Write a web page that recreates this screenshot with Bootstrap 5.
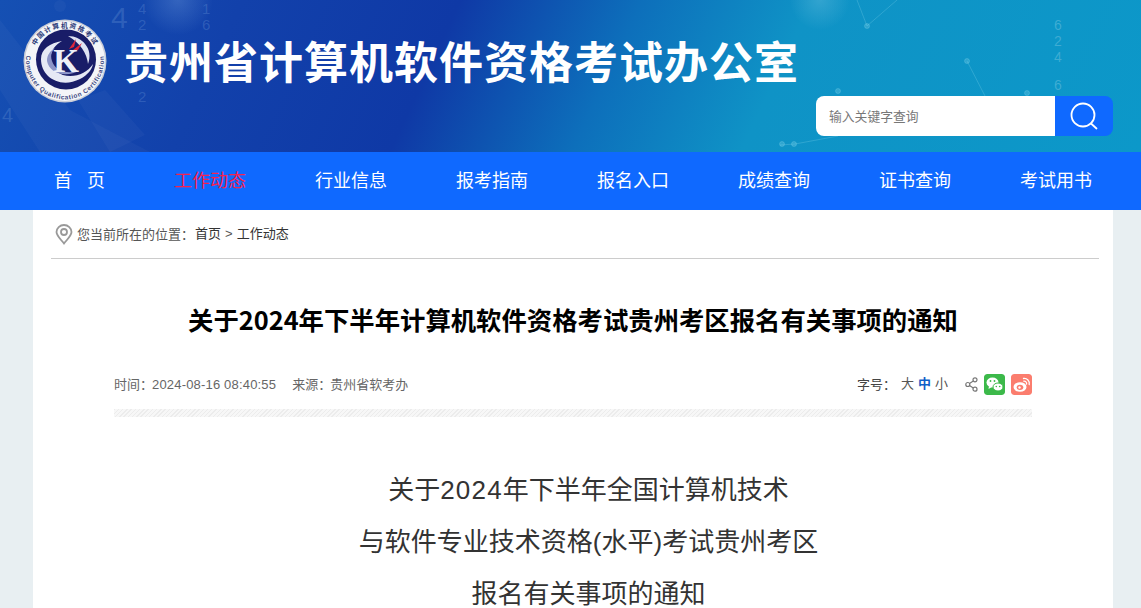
<!DOCTYPE html>
<html lang="zh-CN">
<head>
  <meta charset="UTF-8">
  <meta name="viewport" content="width=device-width, initial-scale=1.0">
  <title>贵州省计算机软件资格考试办公室</title>
  <link href="https://cdn.jsdelivr.net/npm/bootstrap@5.3.0/dist/css/bootstrap.min.css" rel="stylesheet">
  <style>
    html, body { height: 608px; overflow: hidden; }
    body {
      background-color: #e8eff2;
      font-family: "Liberation Sans", "Noto Sans CJK SC", sans-serif;
      color: #333;
    }
    .site-banner {
      position: relative;
      height: 152px;
      overflow: hidden;
      background:
        radial-gradient(circle 35px at 178px 0, rgba(170, 210, 250, .22), transparent 100%),
        radial-gradient(circle 30px at 820px 0, rgba(190, 230, 245, .2), transparent 100%),
        linear-gradient(115deg, #1550b3 0%, #1241ab 20%, #0f39a6 38%, #0d6fbb 53%, #0f93c6 67%, #0c98c9 100%);
    }
    .banner-art { position: absolute; left: 0; top: 0; }
    .banner-inner { position: relative; height: 100%; }
    .logo-wrap { position: absolute; left: 22px; top: 19px; }
    .site-name {
      position: absolute;
      left: 124px;
      top: 34px;
      margin: 0;
      font-size: 44px;
      line-height: 52px;
      font-weight: 700;
      letter-spacing: 1px;
      color: #fff;
      white-space: nowrap;
      font-family: "Noto Sans CJK SC", sans-serif;
    }
    .search-box {
      position: absolute;
      left: 816px;
      top: 96px;
      width: 297px;
      height: 40px;
    }
    .search-box input {
      flex: 1;
      min-width: 0;
      border: 0;
      outline: 0;
      padding: 2px 13px 0;
      font-size: 12.8px;
      color: #666;
      background: #fff;
      border-radius: 8px 0 0 8px;
    }
    .search-box input::placeholder { color: #777; opacity: 1; }
    .search-go {
      width: 58px;
      border: 0;
      background: #0f69ff;
      padding: 0;
      border-radius: 0 8px 8px 0;
    }
    .main-nav {
      height: 58px;
      background: #0f69ff;
      padding: 0 49px 0 54px;
    }
    .main-nav a {
      font-size: 18px;
      color: #fff;
      text-decoration: none;
      white-space: nowrap;
    }
    .main-nav a.is-current { color: #f5224e; }
    .page-sheet {
      width: 1080px;
      margin-left: 33px;
      height: 398px;
      background: #fff;
      padding: 0 14px 0 18px;
    }
    .crumbs {
      height: 49px;
      border-bottom: 1px solid #ccc;
      padding-left: 4px;
      font-size: 13px;
      color: #555;
      white-space: nowrap;
    }
    .crumbs a { color: #333; text-decoration: none; }
    .crumbs .crumb-first { margin-left: 2px; }
    .tc-colon { font-family: "Noto Sans CJK TC", sans-serif; margin-right: -1px; }
    .doc-area { padding: 0 67px 0 63px; }
    .doc-title {
      margin: 42px -20px 0;
      text-align: center;
      font-size: 25.36px;
      line-height: 36px;
      font-weight: 700;
      color: #000;
      white-space: nowrap;
      font-family: "Noto Sans CJK SC", sans-serif;
    }
    .doc-meta {
      margin-top: 37px;
      height: 20px;
      font-size: 13px;
      color: #666;
      white-space: nowrap;
    }
    .stamp-num { letter-spacing: .18px; }
    .size-links { gap: 4px; margin-right: 3px; }
    .size-links a { color: #555; text-decoration: none; }
    .size-links a.is-on { color: #0f5fc8; font-weight: 700; }
    .size-label { color: #444; margin-right: 2px; }
    .tool-row { gap: 6px; }
    .soc-tile {
      width: 21px;
      height: 21px;
      border-radius: 3px;
      display: block;
    }
    .stripe-bar {
      height: 8px;
      margin-top: 15px;
      background: repeating-linear-gradient(135deg, #ececec 0 1px, #f7f7f7 1px 3px);
    }
    .doc-body {
      margin-top: 47px;
      padding-left: 31px;
      text-align: center;
      font-size: 26px;
      line-height: 52px;
      color: #333;
    }
    .doc-body p { margin: 0; }
    .yr-num { letter-spacing: 1.2px; }
  </style>
</head>
<body>
  <header class="site-banner">
    <svg class="banner-art" width="1141" height="152" viewBox="0 0 1141 152">
      <g fill="#fff" fill-opacity=".03">
        <polygon points="0,20 70,110 150,152 40,152 0,90"/>
        <polygon points="78,100 105,90 145,135 110,152"/>
        <circle cx="60" cy="6" r="6"/>
      </g>
      <g fill="#9fc4ee" fill-opacity=".2" font-family="Liberation Sans, sans-serif" font-size="15">
        <text x="111" y="28" font-size="30">4</text>
        <text x="138" y="14">4</text><text x="138" y="30">2</text>
        <text x="138" y="102">2</text>
        <text x="202" y="14">1</text><text x="202" y="30">6</text>
        <text x="2" y="122" font-size="20">4</text>
      </g>
      <g stroke="#8fdcf0" stroke-opacity=".25" fill="#8fdcf0" fill-opacity=".25">
        <path d="M857 0 L867 26 L897 0 M967 61 L985 96 M780 145 L795 144 L838 136" fill="none"/>
        <circle cx="867" cy="26" r="2.500"/><circle cx="967" cy="61" r="2.500"/><circle cx="838" cy="91" r="2.500"/><circle cx="1027" cy="93" r="2.500"/>
        <circle cx="782" cy="144" r="2.500"/><circle cx="794" cy="144" r="2.500"/>
      </g>
      <g fill="#bfe6f2" fill-opacity=".28" font-family="Liberation Sans, sans-serif" font-size="14" text-anchor="middle">
        <text x="1058" y="30">6</text><text x="1058" y="46">2</text><text x="1058" y="62">4</text><text x="1058" y="90">6</text>
      </g>
    </svg>
    <div class="banner-inner">
      <div class="logo-wrap">
        <svg width="86" height="84" viewBox="0 0 86 84">
          <defs>
            <path id="ringTop" d="M10.500 41 A32.500 32.500 0 0 1 75.500 41"/>
            <path id="ringBot" d="M4.900 33 A39 39 0 1 0 81.100 33"/>
          </defs>
          <circle cx="43" cy="42" r="41.500" fill="#c9cdd8"/>
          <circle cx="43" cy="42" r="40" fill="#f4f5f8"/>
          <circle cx="44" cy="40.500" r="30" fill="#191d68"/>
          <path d="M19 40 C19 58 38 70 58 60 C66 56 70 50 71 45 C64 56 46 62 34 52 C25 44 27 29 40 22 C28 24 19 30 19 40Z" fill="#e6e9f5"/>
          <path d="M25 42 C27 54 44 60 58 51 C46 56 33 52 30 42 C28 36 30 32 33 29 C28 32 25 36 25 42Z" fill="#8d95c8"/>
          <path d="M46 17 C60 17 72 30 66 45 C65 34 58 24 46 17Z" fill="#dfe3f2"/>
          <text x="44" y="53" text-anchor="middle" font-family="Liberation Serif, serif" font-weight="700" font-size="33" fill="#eef0f8">K</text>
          <path d="M47 30 L54 20 L52 28Z M51 31 L60 24 L56 31Z" fill="#e0263c"/>
          <text font-size="6.800" font-weight="700" letter-spacing="1.300" fill="#2b3a78" font-family="Noto Sans CJK SC, sans-serif" text-anchor="middle"><textPath href="#ringTop" startOffset="50%">中国计算机资格考试</textPath></text>
          <text font-size="6.400" font-weight="700" letter-spacing=".6" fill="#3a4680" font-family="Liberation Sans, sans-serif" text-anchor="middle"><textPath href="#ringBot" startOffset="50%">Computer Qualification Certification</textPath></text>
        </svg>
      </div>
      <h1 class="site-name">贵州省计算机软件资格考试办公室</h1>
      <form class="search-box d-flex">
        <input type="text" placeholder="输入关键字查询" aria-label="输入关键字查询">
        <button type="button" class="search-go d-flex align-items-center justify-content-center" aria-label="查询">
          <svg width="28" height="28" viewBox="0 0 28 28" fill="none" stroke="#fff" stroke-width="1.800"><circle cx="13" cy="13" r="11.500"/><path d="M21 21.500 L26.500 26.500" stroke-linecap="round"/></svg>
        </button>
      </form>
    </div>
  </header>

  <nav class="main-nav d-flex align-items-center justify-content-between">
    <a href="#">首&nbsp;&nbsp;&nbsp;页</a>
    <a href="#" class="is-current">工作动态</a>
    <a href="#">行业信息</a>
    <a href="#">报考指南</a>
    <a href="#">报名入口</a>
    <a href="#">成绩查询</a>
    <a href="#">证书查询</a>
    <a href="#">考试用书</a>
  </nav>

  <main class="page-sheet">
    <div class="crumbs d-flex align-items-center">
      <svg class="me-1 flex-shrink-0" width="18" height="21" viewBox="0 0 18 21" fill="none" stroke="#999" stroke-width="1.800"><path d="M9 19.500 C5 14.500 1.500 11.500 1.500 8 A7.500 7 0 0 1 16.500 8 C16.500 11.500 13 14.500 9 19.500Z"/><circle cx="9" cy="8" r="3"/></svg>
      <span>您当前所在的位置<span class="tc-colon">：</span></span>
      <a href="#" class="crumb-first">首页</a><span class="mx-1">&gt;</span><a href="#">工作动态</a>
    </div>
    <div class="doc-area">
      <h2 class="doc-title">关于2024年下半年计算机软件资格考试贵州考区报名有关事项的通知</h2>
      <div class="doc-meta d-flex align-items-center justify-content-between">
        <div><span>时间<span class="tc-colon">：</span><span class="stamp-num">2024-08-16 08:40:55</span></span><span class="ms-3">来源<span class="tc-colon">：</span>贵州省软考办</span></div>
        <div class="tool-row d-flex align-items-center">
          <div class="size-links d-flex align-items-center">
            <span class="size-label">字号<span class="tc-colon">：</span></span><a href="#">大</a>
            <a href="#" class="is-on">中</a>
            <a href="#">小</a>
          </div>
          <svg class="ms-2" width="13" height="15" viewBox="0 0 13 15" fill="none" stroke="#777" stroke-width="1.200"><circle cx="10" cy="2.800" r="2"/><circle cx="2.800" cy="7.500" r="2"/><circle cx="10" cy="12.200" r="2"/><path d="M4.500 6.500 L8.300 4 M4.500 8.500 L8.300 11"/></svg>
          <svg class="soc-tile" viewBox="0 0 21 21"><rect width="21" height="21" rx="3" fill="#3cb94a"/><ellipse cx="8.500" cy="8.500" rx="6" ry="5" fill="#fff"/><path d="M5 12 L4.500 15 L8 13Z" fill="#fff"/><ellipse cx="14" cy="13" rx="5" ry="4" fill="#fff" stroke="#3cb94a"/><circle cx="6.500" cy="7" r=".9" fill="#3cb94a"/><circle cx="10.500" cy="7" r=".9" fill="#3cb94a"/><circle cx="12.300" cy="12.500" r=".8" fill="#3cb94a"/><circle cx="15.700" cy="12.500" r=".8" fill="#3cb94a"/></svg>
          <svg class="soc-tile" viewBox="0 0 21 21"><rect width="21" height="21" rx="3" fill="#fb7d6e"/><ellipse cx="9" cy="13" rx="6.500" ry="4.800" fill="#fff"/><ellipse cx="9" cy="13.300" rx="3.300" ry="2.600" fill="#fb7d6e"/><circle cx="8.500" cy="13.500" r="1.200" fill="#fff"/><path d="M12.500 4.500 A5 5 0 0 1 18.200 10.500 M12.800 7.200 A2.400 2.400 0 0 1 15.600 10" fill="none" stroke="#fff" stroke-width="1.300" stroke-linecap="round"/></svg>
        </div>
      </div>
      <div class="stripe-bar"></div>
      <div class="doc-body">
        <p>关于<span class="yr-num">2024</span>年下半年全国计算机技术</p>
        <p>与软件专业技术资格(水平)考试贵州考区</p>
        <p>报名有关事项的通知</p>
      </div>
    </div>
  </main>

  <script src="https://cdn.jsdelivr.net/npm/bootstrap@5.3.0/dist/js/bootstrap.bundle.min.js"></script>
</body>
</html>
